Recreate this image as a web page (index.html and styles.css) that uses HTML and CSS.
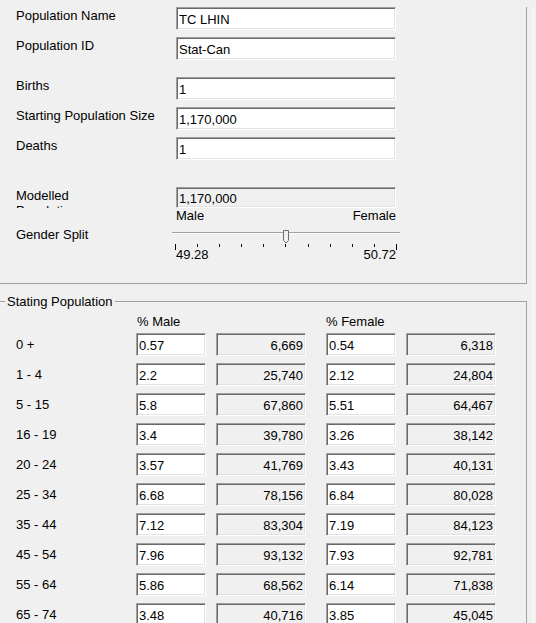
FILE: index.html
```html
<!DOCTYPE html>
<html lang="en">
<head>
    <meta charset="UTF-8">
    <meta name="viewport" content="width=device-width, initial-scale=1.0">
    <title>Population</title>
    <link rel="stylesheet" href="styles.css">
</head>
<body>

<div class="window">
    <div class="panel">
        <div class="field">
            <label for="popName">Population Name</label>
            <input type="text" id="popName" class="box" value="TC LHIN" />
        </div>
        <div class="field">
            <label for="popId">Population ID</label>
            <input type="text" id="popId" class="box" value="Stat-Can" />
        </div>
        <div class="field gap-big">
            <label for="births">Births</label>
            <input type="text" id="births" class="box" value="1" />
        </div>
        <div class="field">
            <label for="startSize">Starting Population Size</label>
            <input type="text" id="startSize" class="box" value="1,170,000" />
        </div>
        <div class="field">
            <label for="deaths">Deaths</label>
            <input type="text" id="deaths" class="box" value="1" />
        </div>
        <div class="field gap-model">
            <label for="modelled" class="clip">Modelled Population</label>
            <input type="text" id="modelled" class="box ro short" value="1,170,000" readonly />
        </div>

        <div class="ends">
            <span>Male</span>
            <span>Female</span>
        </div>
        <div class="split-row">
            <label class="split-label">Gender Split</label>
            <div class="slider">
                <div class="track"></div>
                <svg class="thumb" width="7" height="14" viewBox="0 0 7 14">
                    <polygon points="0.5,0.5 5.5,0.5 5.5,10.5 3,13 0.5,10.5" fill="#f0f0f0" stroke="#6f6f6f" stroke-width="1" />
                </svg>
                <div class="ticks">
                    <i class="long"></i><i></i><i></i><i></i><i></i><i></i><i></i><i></i><i></i><i></i><i class="long"></i>
                </div>
            </div>
        </div>
        <div class="ends">
            <span>49.28</span>
            <span>50.72</span>
        </div>
    </div>

    <fieldset class="group">
        <legend>Stating Population</legend>
        <div class="heads">
            <span class="head-m">% Male</span>
            <span class="head-f">% Female</span>
        </div>
        <div class="grid" id="ageGrid"></div>
    </fieldset>
</div>

<script>
    const rows = [
        ['0 +', '0.57', '6,669', '0.54', '6,318'],
        ['1 - 4', '2.2', '25,740', '2.12', '24,804'],
        ['5 - 15', '5.8', '67,860', '5.51', '64,467'],
        ['16 - 19', '3.4', '39,780', '3.26', '38,142'],
        ['20 - 24', '3.57', '41,769', '3.43', '40,131'],
        ['25 - 34', '6.68', '78,156', '6.84', '80,028'],
        ['35 - 44', '7.12', '83,304', '7.19', '84,123'],
        ['45 - 54', '7.96', '93,132', '7.93', '92,781'],
        ['55 - 64', '5.86', '68,562', '6.14', '71,838'],
        ['65 - 74', '3.48', '40,716', '3.85', '45,045']
    ];

    let html = '';
    rows.forEach(r => {
        html += `<span class="age">${r[0]}</span>
            <input type="text" class="box pct" value="${r[1]}" />
            <input type="text" class="box ro count" value="${r[2]}" readonly />
            <input type="text" class="box pct" value="${r[3]}" />
            <input type="text" class="box ro count" value="${r[4]}" readonly />`;
    });
    document.getElementById('ageGrid').innerHTML = html;
</script>

</body>
</html>
```

FILE: styles.css
```css
html {
    overflow: hidden;
}
body {
    margin: 0;
    background-color: #f0f0f0;
    font-family: "Liberation Sans", Arial, sans-serif;
    font-size: 13px;
    line-height: 15px;
    color: #000;
}
.window {
    width: 533px;
    min-height: 623px;
    border-right: 1px solid #fafafa;
}
.panel {
    box-sizing: border-box;
    width: 527px;
    height: 277px;
    padding: 0 0 0 16px;
    border-right: 1px solid #a0a0a0;
    border-bottom: 1px solid #a0a0a0;
}
.field {
    display: flex;
    align-items: flex-start;
    margin-top: 7px;
}
.gap-big {
    margin-top: 17px;
}
.gap-model {
    margin-top: 27px;
}
.field label {
    width: 160px;
    padding-top: 1px;
}
.field label.clip {
    width: 110px;
    margin-right: 50px;
    height: 20px;
    overflow: hidden;
}
.box {
    box-sizing: border-box;
    height: 23px;
    margin: 0;
    padding: 1px 2px 0 2px;
    font-family: "Liberation Sans", Arial, sans-serif;
    font-size: 13px;
    color: #000;
    background-color: #fff;
    border: 1px solid;
    border-color: #a0a0a0 #fff #fff #a0a0a0;
    box-shadow: inset 1px 1px #696969, inset -1px -1px #e3e3e3;
    border-radius: 0;
    outline: none;
}
.field .box {
    width: 220px;
}
.field .short {
    height: 21px;
}
.ro {
    background-color: #f0f0f0;
}
.ends {
    display: flex;
    justify-content: space-between;
    width: 220px;
    margin-left: 160px;
}
.split-row {
    display: flex;
    height: 24px;
}
.split-label {
    width: 156px;
    padding-top: 4px;
}
.slider {
    position: relative;
    width: 228px;
}
.track {
    height: 1px;
    margin-top: 9px;
    background-color: #a0a0a0;
    border-bottom: 1px solid #fff;
}
.thumb {
    position: absolute;
    left: 111px;
    top: 7px;
}
.ticks {
    display: flex;
    justify-content: space-between;
    align-items: flex-start;
    margin-top: 10px;
    padding: 0 3px;
}
.ticks i {
    display: block;
    width: 1px;
    height: 3px;
    background-color: #000;
}
.ticks i.long {
    height: 6px;
}
.group {
    box-sizing: border-box;
    width: 529px;
    margin: 10px 0 0 -2px;
    padding: 0 0 12px 17px;
    border: 1px solid #a0a0a0;
    min-width: 0;
}
.group legend {
    margin-left: -11px;
    padding: 0 2px;
}
.heads {
    display: flex;
    margin-top: 5px;
    margin-bottom: 4px;
    padding-left: 121px;
}
.head-m {
    width: 189px;
}
.grid {
    display: grid;
    grid-template-columns: 120px 80px 110px 80px 90px;
    row-gap: 7px;
}
.age {
    line-height: 23px;
}
.pct {
    width: 70px;
}
.count {
    width: 90px;
    text-align: right;
}
```
